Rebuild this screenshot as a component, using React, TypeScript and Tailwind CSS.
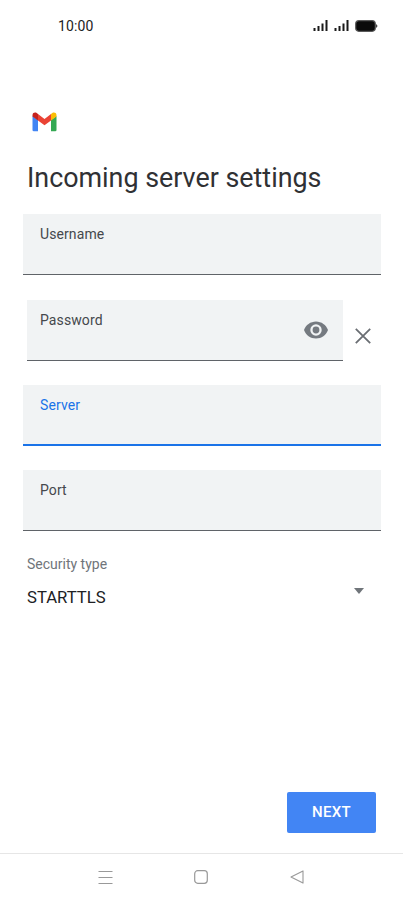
import React from "react";

function Signal() {
  return (
    <svg width="16" height="12" viewBox="0 0 16 12" fill="#1a1a1a">
      <rect x="0.5" y="8" width="2" height="3" />
      <rect x="4.5" y="6" width="2" height="5" />
      <rect x="8.5" y="3.500" width="2" height="7.500" />
      <rect x="12.5" y="0" width="2" height="11" />
    </svg>
  );
}

function Field({ label, active, className, children }: { label: string; active?: boolean; className: string; children?: React.ReactNode }) {
  return (
    <div className={`h-[61px] bg-[#f1f3f4] flex justify-between shrink-0 ${active ? "border-b-2 border-[#1a73e8]" : "border-b border-[#5f6368]"} ${className}`}>
      <span className={`text-[14px] leading-5 mt-[9.5px] tracking-[0.1px] ${active ? "text-[#1a73e8]" : "text-[#45484c]"}`}>{label}</span>
      {children}
    </div>
  );
}

export default function App() {
  return (
    <div className="w-[403px] h-[902px] bg-white flex flex-col overflow-hidden font-['Roboto',sans-serif]">
      <div className="h-[52px] flex items-center justify-between pl-[58px] pr-[25px] shrink-0">
        <span className="text-[14px] text-[#222] tracking-[0.1px]">10:00</span>
        <div className="flex items-center gap-[5px]">
          <Signal />
          <Signal />
          <svg width="23" height="12" viewBox="0 0 23 12">
            <rect x="0.7" y="0.7" width="19.6" height="10.6" rx="3.2" fill="#0a0a0a" stroke="#5a5a5a" strokeWidth="1.2" />
            <path d="M21 4.2c1 .3 1.4 1 1.4 1.8s-.4 1.5-1.4 1.8z" fill="#444" />
          </svg>
        </div>
      </div>

      <div className="pl-[32px] mt-[60px] h-[20px] shrink-0">
        <svg width="25" height="20" viewBox="0 0 25 20">
          <path d="M0.5 4 V18 a1.3 1.3 0 0 0 1.3 1.3 H6 V8 Z" fill="#4285f4" />
          <path d="M19 8 V19.3 H23.2 a1.3 1.3 0 0 0 1.3 -1.3 V4 Z" fill="#34a853" />
          <path d="M19 2 V8.5 L24.5 4.500 V3 C24.5 0.8 22 0 20.3 1 Z" fill="#fbbc04" />
          <path d="M6 8.5 L12.5 13.3 L19 8.5 V2 L12.5 6.9 L6 2 Z" fill="#ea4335" />
          <path d="M0.5 3 V4.5 L6 8.5 V2 L4.7 1 C3 0 0.5 0.8 0.5 3 Z" fill="#c5221f" />
        </svg>
      </div>

      <h1 className="ml-[27px] mt-[28px] text-[26.87px] leading-[36px] font-normal text-[#303134] shrink-0">Incoming server settings</h1>

      <Field label="Username" className="mt-[18px] ml-[23px] mr-[22px] pl-[17px]" />

      <div className="flex items-center mt-[25px] shrink-0">
        <Field label="Password" className="ml-[27px] w-[316px] pl-[13px] pr-[14px]">
          <svg width="26" height="18" viewBox="0 0 26 18" className="mt-[21px]">
            <path fillRule="evenodd" fill="#757a80" d="M13 0.5C7.5 0.5 2.8 4 1 9c1.8 5 6.500 8.500 12 8.500s10.200-3.500 12-8.500c-1.800-5-6.500-8.500-12-8.500zM13 14.700a5.700 5.700 0 1 1 0-11.400 5.700 5.700 0 0 1 0 11.400zM13 5.600a3.400 3.400 0 1 0 0 6.800 3.400 3.400 0 0 0 0-6.800z" />
          </svg>
        </Field>
        <svg width="16" height="16" viewBox="0 0 16 16" className="ml-[12px] mt-[11px]">
          <path d="M0.800 0.800 L15.200 15.200 M15.200 0.800 L0.800 15.200" stroke="#6a6e73" strokeWidth="1.800" />
        </svg>
      </div>

      <Field label="Server" active className="mt-[24px] ml-[23px] mr-[22px] pl-[17px]" />
      <Field label="Port" className="mt-[24px] ml-[23px] mr-[22px] pl-[17px]" />

      <div className="mt-[23px] ml-[27px] mr-[39px] flex justify-between shrink-0">
        <div>
          <div className="text-[14px] leading-5 text-[#70757a]">Security type</div>
          <div className="mt-[12px] text-[16.7px] leading-6 text-[#202124]">STARTTLS</div>
        </div>
        <div className="mt-[24px] w-0 h-0 translate-y-[10px] border-x-[5.500px] border-x-transparent border-t-[6px] border-t-[#70757a]" />
      </div>

      <div className="flex-1" />

      <div className="flex justify-end pr-[27px] shrink-0">
        <button className="w-[89px] h-[41px] rounded-[2px] bg-[#4285f4] text-white text-[15px] font-medium tracking-[0.3px]">NEXT</button>
      </div>

      <div className="mt-[20px] h-[49px] border-t border-[#e6e6e6] flex items-center shrink-0 pl-[98px] pb-[2px]">
        <svg width="15" height="15" viewBox="0 0 15 15">
          <path d="M0.500 1.500H14.500M0.500 7.500H14.500M0.500 13.500H14.500" stroke="#999" strokeWidth="1.100" />
        </svg>
        <svg width="14" height="14" viewBox="0 0 14 14" className="ml-[81px]">
          <rect x="0.700" y="0.700" width="12.600" height="12.600" rx="3" fill="none" stroke="#999" strokeWidth="1.200" />
        </svg>
        <svg width="14" height="14" viewBox="0 0 14 14" className="ml-[82px]">
          <path d="M13 0.900V13.100L1 7Z" fill="none" stroke="#999" strokeWidth="1.100" strokeLinejoin="round" />
        </svg>
      </div>
    </div>
  );
}
